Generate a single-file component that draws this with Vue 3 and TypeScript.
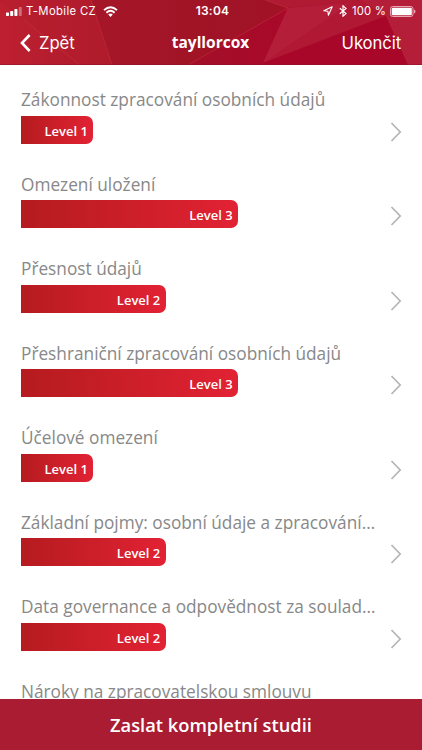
<script setup lang="ts">
interface Topic {
  title: string
  level: number
}

const topics: Topic[] = [
  { title: 'Zákonnost zpracování osobních údajů', level: 1 },
  { title: 'Omezení uložení', level: 3 },
  { title: 'Přesnost údajů', level: 2 },
  { title: 'Přeshraniční zpracování osobních údajů', level: 3 },
  { title: 'Účelové omezení', level: 1 },
  { title: 'Základní pojmy: osobní údaje a zpracování…', level: 2 },
  { title: 'Data governance a odpovědnost za soulad…', level: 2 },
  { title: 'Nároky na zpracovatelskou smlouvu', level: 1 },
]

const barWidth = (level: number): string => `${level * 72.4}px`
</script>

<template>
  <div class="screen">
    <header class="header">
      <svg class="facets" viewBox="0 0 422 65" preserveAspectRatio="none" aria-hidden="true">
        <defs>
          <linearGradient id="base" x1="0" y1="0" x2="1" y2="0">
            <stop offset="0" stop-color="#be2030" />
            <stop offset=".27" stop-color="#aa1a2b" />
            <stop offset=".5" stop-color="#9f1325" />
            <stop offset="1" stop-color="#ad0b2c" />
          </linearGradient>
          <linearGradient id="lower" x1="0" y1="0" x2="1" y2="0">
            <stop offset="0" stop-color="#a21028" />
            <stop offset="1" stop-color="#aa0829" />
          </linearGradient>
        </defs>
        <rect width="422" height="65" fill="url(#base)" />
        <path d="M0 0H91L112 65H80L24 20L0 2Z" fill="#b51d2e" opacity=".55" />
        <path d="M91 0H265L288 8L188 65H112Z" fill="#a11426" opacity=".65" />
        <path d="M265 0H360L350 2L288 8Z" fill="#b01a32" />
        <path d="M288 8L188 65H263L278 34Z" fill="url(#lower)" />
        <path d="M288 8L360 0L386 16L263 63Z" fill="#b01834" />
        <path d="M288 8L350 3L263 63Z" fill="#b7233e" opacity=".6" />
        <path d="M263 63L386 16L408 65H263Z" fill="#a90729" />
        <path d="M360 0H422V65H408L386 16Z" fill="#b51e39" />
        <path d="M24 20L80 65M91 0L112 65M188 65L288 8L265 0" fill="none" stroke="#d23b48" stroke-width="1" opacity=".4" />
        <rect y="64" width="422" height="1" fill="#8e1429" opacity=".55" />
      </svg>

      <div class="status">
        <div class="status-left">
          <svg class="signal" width="16" height="9" viewBox="0 0 16 9" fill="#fff">
            <rect y="5.5" width="3" height="3.5" rx=".7" />
            <rect x="4.2" y="4" width="3" height="5" rx=".7" />
            <rect x="8.4" y="2" width="3" height="7" rx=".7" />
            <rect x="12.8" width="3" height="9" rx=".7" opacity=".35" />
          </svg>
          <span class="carrier">T-Mobile CZ</span>
          <svg class="wifi" width="15" height="11" viewBox="0 0 15 11" fill="none" stroke="#fff" stroke-width="1.9">
            <path d="M1 4.1Q7.5 -1.8 14 4.1" />
            <path d="M3.4 6.7Q7.5 3 11.6 6.7" />
            <path d="M5.2 8.5Q7.5 6.5 9.8 8.5L7.5 10.9Z" fill="#fff" stroke="none" />
          </svg>
        </div>
        <span class="clock">13:04</span>
        <div class="status-right">
          <svg width="10" height="10" viewBox="0 0 10 10" fill="none" stroke="#fff" stroke-width="1.1">
            <path d="M.8 4.8L9.2 .8L5.4 9.2L4.9 5.2Z" stroke-linejoin="round" />
          </svg>
          <svg class="bluetooth" width="8" height="12" viewBox="0 0 8 12" fill="none" stroke="#fff" stroke-width="1.2">
            <path d="M.8 3.2L7 8.6L4 11.2V.8L7 3.4L.8 8.8" />
          </svg>
          <span class="percent">100 %</span>
          <svg class="battery" width="26" height="11" viewBox="0 0 26 11">
            <rect x=".5" y=".5" width="22.5" height="10" rx="2.2" fill="none" stroke="#e6a7b2" />
            <rect x="1.7" y="1.7" width="20.1" height="7.6" rx="1" fill="#fff" />
            <path d="M24 3.6Q25.5 4.1 25.5 5.5T24 7.4Z" fill="#e6a7b2" />
          </svg>
        </div>
      </div>

      <nav class="nav">
        <button class="back">
          <svg width="11" height="18" viewBox="0 0 11 18" fill="none" stroke="#fff" stroke-width="2.6">
            <path d="M9.6 1L2 9L9.6 17" />
          </svg>
          <span>Zpět</span>
        </button>
        <h1 class="brand">tayllorcox</h1>
        <button class="finish">Ukončit</button>
      </nav>
    </header>

    <main class="list">
      <article v-for="topic in topics" :key="topic.title" class="row">
        <h2 class="title">{{ topic.title }}</h2>
        <div class="progress">
          <div class="bar" :style="{ width: barWidth(topic.level) }">Level {{ topic.level }}</div>
          <svg class="chevron" width="12" height="20" viewBox="0 0 12 20" fill="none" stroke="#b5b5b7" stroke-width="1.7">
            <path d="M1.5 1L10.2 10L1.5 19" />
          </svg>
        </div>
      </article>
    </main>

    <button class="send">Zaslat kompletní studii</button>
  </div>
</template>

<style>
body {
  overflow: hidden;
}
</style>

<style scoped>
.screen {
  display: flex;
  flex-direction: column;
  width: 422px;
  height: 750px;
  background: #fff;
  overflow: hidden;
  font-family: "Open Sans", sans-serif;
}

button {
  border: 0;
  padding: 0;
  background: none;
  color: #fff;
}

.header {
  position: relative;
  flex: 0 0 65px;
  color: #fff;
  font-family: Inter, sans-serif;
}

.facets {
  position: absolute;
  inset: 0;
  width: 100%;
  height: 100%;
}

.status,
.nav {
  position: relative;
  display: grid;
  grid-template-columns: 1fr auto 1fr;
  align-items: center;
}

.status {
  height: 22px;
  padding: 0 6px;
  font-size: 11.3px;
  line-height: 22px;
}

.status-left,
.status-right {
  display: flex;
  align-items: center;
}

.status-right {
  justify-content: flex-end;
}

.carrier {
  margin-left: 4px;
  letter-spacing: 0.35px;
}

.wifi {
  margin-left: 7px;
}

.clock {
  padding-left: 3px;
  font-size: 12px;
  font-weight: 600;
  letter-spacing: 0.2px;
}

.bluetooth {
  margin-left: 6px;
}

.percent {
  margin: 0 4px 0 5px;
  letter-spacing: 0.2px;
}

.nav {
  height: 42px;
  padding: 0 21px 0 20px;
}

.back,
.finish {
  display: flex;
  align-items: center;
  font-family: Inter, sans-serif;
  font-size: 16.7px;
  letter-spacing: -0.1px;
}

.back {
  gap: 8px;
}

.finish {
  justify-content: flex-end;
}

.brand {
  margin: 0;
  padding-bottom: 3px;
  font-family: "Open Sans", sans-serif;
  font-size: 15.5px;
  font-weight: 700;
  line-height: 20px;
}

.list {
  flex: 1;
  min-height: 0;
  overflow: hidden;
  padding: 23px 20px 0 21px;
}

.row {
  height: 84.5px;
}

.title {
  margin: 0;
  color: #888;
  font-size: 17.25px;
  font-weight: 400;
  line-height: 24px;
  white-space: nowrap;
}

.progress {
  display: flex;
  align-items: center;
  justify-content: space-between;
  margin-top: 3.8px;
}

.bar {
  box-sizing: border-box;
  height: 28px;
  padding-right: 5.5px;
  border-radius: 0 7px 7px 0;
  background: linear-gradient(90deg, #b51b1f, #e22234);
  color: #fff;
  font-size: 13px;
  font-weight: 600;
  line-height: 31px;
  text-align: right;
}

.chevron {
  margin-top: 4px;
}

.send {
  flex: 0 0 51px;
  background: #a91c32;
  font-family: "Open Sans", sans-serif;
  font-size: 18.3px;
  font-weight: 600;
  line-height: 51px;
}
</style>
